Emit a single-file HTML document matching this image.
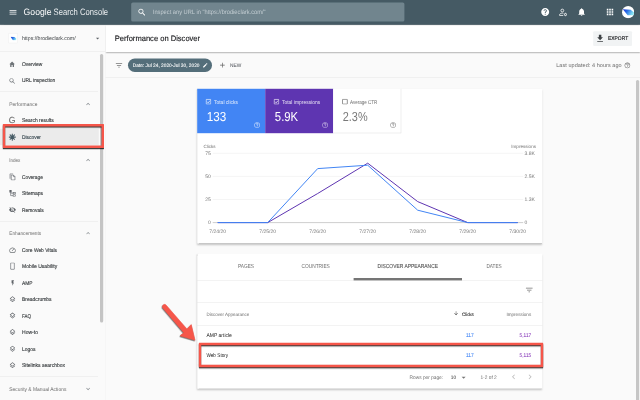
<!DOCTYPE html>
<html lang="en">
<head>
<meta charset="utf-8">
<title>Performance on Discover - Google Search Console</title>
<style>
html,body{margin:0;padding:0;width:640px;height:400px;overflow:hidden;background:#fafafa;}
#stage{text-rendering:geometricPrecision;position:absolute;left:0;top:0;width:1600px;height:1000px;transform:scale(0.4);transform-origin:0 0;font-family:"Liberation Sans",Arial,sans-serif;color:#212121;overflow:hidden;background:#fafafa;}
#stage *{box-sizing:border-box;}
.abs{position:absolute;}
.t{position:absolute;white-space:nowrap;line-height:1;transform-origin:0 50%;}
.b{font-weight:bold;}
.m{-webkit-text-stroke:0.35px currentColor;}
.m2{-webkit-text-stroke:0.18px currentColor;}
.w{color:#fff;}
.g{color:#6b6b6b;}
.nav{color:#3c4043;}
.ic{position:absolute;display:block;}
.lbl{color:rgba(255,255,255,.85);}
.hd{color:#424242;}
.gg{color:#6b6b6b;-webkit-text-stroke:0.25px currentColor;}
.bg{color:#797979;}
.nw{color:#5f6368;}
.ph{color:#c3cdd2;}
.lt{color:#eceff1;}
.act{color:#37474f;}
.ttl{color:#202124;}
.tabon{color:#5a5a5a;}
.row{color:#212121;}
.clk{color:#4285f4;}
.imp{color:#8a3fbb;}
.hl{position:absolute;height:1px;background:#e0e0e0;}
.red{position:absolute;border:6px solid #f6564a;border-radius:1.5px;filter:drop-shadow(0.5px 3px 1.25px rgba(0,0,0,.75));}
</style>
</head>
<body>
<div id="stage">
<!-- ============ TOP BAR ============ -->
<header class="abs" style="left:0;top:0;width:1600px;height:62px;background:#455a64;box-shadow:0 1.5px 3px rgba(0,0,0,.3);z-index:5">
  <svg class="ic" style="left:21px;top:18.5px;width:23px;height:23px" viewBox="0 0 24 24"><path fill="#fff" d="M3 18h18v-2H3v2zm0-5h18v-2H3v2zm0-7v2h18V6H3z"/></svg>
  <span class="t w" style="left:59px;top:19px;font-size:23.25px;transform:scaleX(0.9303)">Google</span>
  <span class="t w lt" style="left:133.75px;top:19px;font-size:23.25px;transform:scaleX(0.8236)">Search Console</span>
  <div class="abs" style="left:327.5px;top:5.75px;width:683.75px;height:48.5px;background:#71858e;border-radius:4px"></div>
  <svg class="ic" style="left:343.25px;top:19px;width:23.5px;height:23.5px" viewBox="0 0 24 24"><path fill="#fff" d="M15.5 14h-.79l-.28-.27C15.41 12.59 16 11.11 16 9.5 16 5.91 13.09 3 9.5 3S3 5.91 3 9.5 5.91 16 9.5 16c1.61 0 3.09-.59 4.23-1.57l.27.28v.79l5 4.99L20.49 19l-4.99-5zm-6 0C7.01 14 5 11.99 5 9.5S7.01 5 9.5 5 14 7.01 14 9.5 11.99 14 9.5 14z"/></svg>
  <span class="t ph" style="left:381.5px;top:22.75px;font-size:15.75px;transform:scaleX(0.9072)">Inspect any URL in "https://brodieclark.com/"</span>
  <!-- right icons -->
  <svg class="ic" style="left:1351.25px;top:18.25px;width:24px;height:24px" viewBox="0 0 24 24"><path fill="#fff" d="M12 2C6.48 2 2 6.48 2 12s4.48 10 10 10 10-4.48 10-10S17.52 2 12 2zm1 17h-2v-2h2v2zm2.07-7.75l-.9.92C13.45 12.9 13 13.5 13 15h-2v-.5c0-1.1.45-2.1 1.17-2.83l1.24-1.26c.37-.36.59-.86.59-1.41 0-1.1-.9-2-2-2s-2 .9-2 2H8c0-2.21 1.79-4 4-4s4 1.79 4 4c0 .88-.36 1.68-.93 2.25z"/></svg>
  <svg class="ic" style="left:1395.75px;top:18.5px;width:23.5px;height:23.5px" viewBox="0 0 24 24" fill="none" stroke="#fff" stroke-width="2"><circle cx="10" cy="7.5" r="3.6"/><path d="M3 20v-1.6c0-2.6 3.4-4.2 7-4.2 .9 0 1.8.1 2.6.3M3 20h9"/><circle cx="17.8" cy="17.6" r="2.6"/><path d="M17.8 13v1.6M17.8 20.6v1.6M13.8 15.3l1.4.8M20.4 19.1l1.4.8M13.8 19.9l1.4-.8M20.4 16.1l1.4-.8" stroke-width="1.6"/></svg>
  <svg class="ic" style="left:1442px;top:18px;width:24px;height:24px" viewBox="0 0 24 24"><path fill="#fff" d="M12 22c1.1 0 2-.9 2-2h-4c0 1.1.89 2 2 2zm6-6v-5c0-3.07-1.64-5.64-4.5-6.32V4c0-.83-.67-1.5-1.5-1.5s-1.5.67-1.5 1.5v.68C7.63 5.36 6 7.92 6 11v5l-2 2v1h16v-1l-2-2z"/></svg>
  <svg class="ic" style="left:1512.5px;top:18.25px;width:24px;height:24px" viewBox="0 0 24 24"><path fill="#fff" d="M4 8h4V4H4v4zm6 12h4v-4h-4v4zm-6 0h4v-4H4v4zm0-6h4v-4H4v4zm6 0h4v-4h-4v4zm6-10v4h4V4h-4zm-6 4h4V4h-4v4zm6 6h4v-4h-4v4zm0 6h4v-4h-4v4z"/></svg>
  <svg class="ic" style="left:1554.625px;top:15.25px;width:30.75px;height:30.75px" viewBox="0 0 24 24"><defs><linearGradient id="wg1" x1="0" y1="0" x2="1" y2="0.35"><stop offset="0" stop-color="#1a2ad2"/><stop offset="0.45" stop-color="#2a6fe6"/><stop offset="1" stop-color="#86e4f2"/></linearGradient></defs><circle cx="12" cy="12" r="12" fill="#fff"/><path fill="url(#wg1)" d="M1.600 6.200L16.900 7.200L23.700 13L21.900 17.900L11 17.900z"/></svg>
</header>
<!-- ============ SIDEBAR ============ -->
<nav class="abs" style="left:0;top:62.5px;width:263.5px;height:937.5px;background:#fafafa;border-right:1px solid #ececec">
  <!-- property selector -->
  <div class="abs" style="left:21px;top:20.5px;width:23px;height:25.25px;background:#fff;border:1px solid #e8e8e8;border-radius:1.5px"></div>
  <svg class="ic" style="left:25.75px;top:28.25px;width:15.5px;height:10.5px" viewBox="0 0 22 14"><defs><linearGradient id="wg2" x1="0" y1="0" x2="1" y2="0.35"><stop offset="0" stop-color="#1a2ad2"/><stop offset="0.45" stop-color="#2a6fe6"/><stop offset="1" stop-color="#86e4f2"/></linearGradient></defs><path fill="url(#wg2)" d="M0.500 0.500L14.500 1.400L21.500 7.500L19.500 13.400L9 13.400z"/></svg>
  <span class="t nav" style="left:55px;top:27px;font-size:13.5px;transform:scaleX(0.9602)">https://brodieclark.com/</span>
  <svg class="ic" style="left:233.5px;top:23.5px;width:20px;height:20px" viewBox="0 0 24 24"><path fill="#5f6368" d="M7 10l5 5 5-5z"/></svg>
  <div class="hl" style="left:0;top:66.5px;width:262.5px"></div>
  <!-- scrollbar -->
  <div class="abs" style="left:250px;top:72.5px;width:7.5px;height:671.25px;background:#c4c4c4;border-radius:3.75px"></div>
  <!-- Overview -->
  <svg class="ic" style="left:22.375px;top:88.75px;width:16.5px;height:19.5px" viewBox="0 0 24 24" preserveAspectRatio="none"><path fill="#6f7478" d="M10 20v-6h4v6h5v-8h3L12 3 2 12h3v8z"/></svg>
  <span class="t nav m" style="left:55px;top:91px;font-size:13.75px;transform:scaleX(0.8813)">Overview</span>
  <!-- URL inspection -->
  <svg class="ic" style="left:20.75px;top:130px;width:19.5px;height:19.5px" viewBox="0 0 24 24"><path fill="#6f7478" d="M15.500 14h-.79l-.28-.27C15.410 12.590 16 11.110 16 9.500 16 5.910 13.090 3 9.500 3S3 5.910 3 9.500 5.910 16 9.500 16c1.610 0 3.090-.59 4.230-1.570l.27.28v.79l5 4.990L20.490 19l-4.990-5zm-6 0C7.010 14 5 11.990 5 9.500S7.010 5 9.500 5 14 7.010 14 9.500 11.990 14 9.500 14z"/></svg>
  <span class="t nav m" style="left:55px;top:131.75px;font-size:13.75px;transform:scaleX(0.8950)">URL inspection</span>
  <div class="hl" style="left:0;top:165.5px;width:245px"></div>
  <!-- Performance -->
  <span class="t g" style="left:22.5px;top:190.5px;font-size:13.25px;transform:scaleX(0.9294)">Performance</span>
  <svg class="ic" style="left:211px;top:188px;width:18.5px;height:18.5px" viewBox="0 0 24 24"><path fill="#80868b" d="M12 8l-6 6 1.410 1.410L12 10.830l4.590 4.590L18 14z"/></svg>
  <span class="t gg" style="left:22.25px;top:227.5px;font-size:22px;transform:scaleX(0.9788)">G</span>
  <span class="t nav m" style="left:55px;top:231.5px;font-size:13.75px;transform:scaleX(0.8989)">Search results</span>
  <!-- Discover (active) -->
  <div class="abs" style="left:0;top:259px;width:246.5px;height:41.5px;background:#ebebeb"></div>
  <svg class="ic" style="left:21px;top:270.5px;width:19.5px;height:19.5px" viewBox="0 0 24 24" stroke="#455a64" stroke-width="3.400" stroke-linecap="round"><path d="M12 2.500v19M2.500 12h19M5.300 5.300l13.400 13.400M18.700 5.300L5.300 18.700"/></svg>
  <span class="t m act" style="left:55px;top:273.75px;font-size:13.75px;transform:scaleX(0.8881)">Discover</span>
  <!-- Index -->
  <div class="hl" style="left:0;top:309.5px;width:245px"></div>
  <span class="t g" style="left:22.5px;top:331.25px;font-size:13.25px;transform:scaleX(0.8638)">Index</span>
  <svg class="ic" style="left:211px;top:328.5px;width:18.5px;height:18.5px" viewBox="0 0 24 24"><path fill="#80868b" d="M12 8l-6 6 1.410 1.410L12 10.830l4.590 4.590L18 14z"/></svg>
  <!-- Coverage -->
  <svg class="ic" style="left:21.5px;top:370px;width:18.5px;height:18.5px" viewBox="0 0 24 24" fill="none" stroke="#5f6368" stroke-width="2" stroke-linejoin="round"><path d="M8 6h7l5 5v11H8z"/><path d="M15 6v5h5"/><path d="M4 18V2h10"/></svg>
  <span class="t nav m" style="left:55px;top:373px;font-size:13.75px;transform:scaleX(0.8722)">Coverage</span>
  <!-- Sitemaps -->
  <svg class="ic" style="left:21.5px;top:411px;width:18.5px;height:18.5px" viewBox="0 0 24 24" fill="none" stroke="#5f6368" stroke-width="2"><rect x="3" y="2.500" width="6" height="6"/><rect x="14" y="9" width="7" height="5"/><rect x="14" y="17" width="7" height="5"/><path d="M6 8.500v11h8M6 11.500h8"/></svg>
  <span class="t nav m" style="left:55px;top:414px;font-size:13.75px;transform:scaleX(0.9160)">Sitemaps</span>
  <!-- Removals -->
  <svg class="ic" style="left:21.5px;top:452.5px;width:18.5px;height:18.5px" viewBox="0 0 24 24"><path fill="#5f6368" d="M12 7c2.760 0 5 2.240 5 5 0 .65-.13 1.260-.36 1.830l2.920 2.920c1.510-1.260 2.700-2.890 3.430-4.750-1.730-4.390-6-7.500-11-7.500-1.400 0-2.740.25-3.980.7l2.160 2.160C10.740 7.130 11.350 7 12 7zM2 4.270l2.280 2.280.46.460C3.080 8.300 1.780 10.020 1 12c1.730 4.390 6 7.500 11 7.500 1.550 0 3.030-.3 4.380-.84l.42.42L19.730 22 21 20.730 3.270 3 2 4.270zM7.530 9.800l1.550 1.550c-.05.21-.08.43-.08.65 0 1.660 1.340 3 3 3 .22 0 .44-.03.65-.08l1.550 1.550c-.67.33-1.410.53-2.200.53-2.760 0-5-2.240-5-5 0-.79.2-1.530.53-2.200zm4.310-.78l3.150 3.150.02-.16c0-1.660-1.340-3-3-3l-.17.010z"/></svg>
  <span class="t nav m" style="left:55px;top:455.5px;font-size:13.75px;transform:scaleX(0.8915)">Removals</span>
  <div class="hl" style="left:0;top:490px;width:245px"></div>
  <!-- Enhancements -->
  <span class="t g" style="left:22.5px;top:513.75px;font-size:13.25px;transform:scaleX(0.9051)">Enhancements</span>
  <svg class="ic" style="left:211px;top:511px;width:18.5px;height:18.5px" viewBox="0 0 24 24"><path fill="#80868b" d="M12 8l-6 6 1.410 1.410L12 10.830l4.590 4.590L18 14z"/></svg>
  <!-- Core Web Vitals -->
  <svg class="ic" style="left:21.5px;top:552.5px;width:18.5px;height:18.5px" viewBox="0 0 24 24" fill="none" stroke="#5f6368" stroke-width="2.300" stroke-linecap="round"><path d="M4 20A9.800 8.600 0 1 1 20 20z"/><path d="M11.500 15l4.500-5"/></svg>
  <span class="t nav m" style="left:55px;top:555px;font-size:13.75px;transform:scaleX(0.8853)">Core Web Vitals</span>
  <!-- Mobile Usability -->
  <svg class="ic" style="left:21.5px;top:593.5px;width:18.5px;height:18.5px" viewBox="0 0 24 24" fill="none" stroke="#5f6368" stroke-width="2"><rect x="6" y="1.500" width="12" height="21" rx="1"/></svg>
  <span class="t nav m" style="left:55px;top:596px;font-size:13.75px;transform:scaleX(0.9140)">Mobile Usability</span>
  <!-- AMP -->
  <svg class="ic" style="left:21.5px;top:635px;width:18.5px;height:18.5px" viewBox="0 0 24 24"><path fill="#5f6368" d="M9 3v10h2.600v8l5.400-10h-3.500l3.500-8z"/></svg>
  <span class="t nav m" style="left:55px;top:638px;font-size:13.75px;transform:scaleX(0.8894)">AMP</span>
  <!-- Breadcrumbs -->
  <svg class="ic" style="left:21.5px;top:676px;width:18.5px;height:18.5px" viewBox="0 0 24 24"><path fill="#5f6368" d="M11.990 18.540l-7.370-5.730L3 14.070l9 7 9-7-1.630-1.270-7.380 5.740zM12 16l7.360-5.730L21 9l-9-7-9 7 1.630 1.270L12 16zm0-11.470L17.740 9 12 13.470 6.260 9 12 4.530z"/></svg>
  <span class="t nav m" style="left:55px;top:679px;font-size:13.75px;transform:scaleX(0.9050)">Breadcrumbs</span>
  <!-- FAQ -->
  <svg class="ic" style="left:21.5px;top:717.5px;width:18.5px;height:18.5px" viewBox="0 0 24 24"><path fill="#5f6368" d="M11.990 18.540l-7.370-5.730L3 14.070l9 7 9-7-1.630-1.270-7.380 5.740zM12 16l7.360-5.730L21 9l-9-7-9 7 1.630 1.270L12 16zm0-11.470L17.740 9 12 13.470 6.260 9 12 4.530z"/></svg>
  <span class="t nav m" style="left:55px;top:720.5px;font-size:13.75px;transform:scaleX(0.8180)">FAQ</span>
  <!-- How-to -->
  <svg class="ic" style="left:21.5px;top:758.5px;width:18.5px;height:18.5px" viewBox="0 0 24 24"><path fill="#5f6368" d="M11.990 18.540l-7.370-5.730L3 14.070l9 7 9-7-1.630-1.270-7.380 5.740zM12 16l7.360-5.730L21 9l-9-7-9 7 1.630 1.270L12 16zm0-11.470L17.740 9 12 13.470 6.260 9 12 4.530z"/></svg>
  <span class="t nav m" style="left:55px;top:761.5px;font-size:13.75px;transform:scaleX(0.9184)">How-to</span>
  <!-- Logos -->
  <svg class="ic" style="left:21.5px;top:800px;width:18.5px;height:18.5px" viewBox="0 0 24 24"><path fill="#5f6368" d="M11.990 18.540l-7.370-5.730L3 14.070l9 7 9-7-1.630-1.270-7.380 5.740zM12 16l7.360-5.730L21 9l-9-7-9 7 1.630 1.270L12 16zm0-11.470L17.740 9 12 13.470 6.260 9 12 4.530z"/></svg>
  <span class="t nav m" style="left:55px;top:803px;font-size:13.75px;transform:scaleX(0.9075)">Logos</span>
  <!-- Sitelinks searchbox -->
  <svg class="ic" style="left:21.5px;top:841px;width:18.5px;height:18.5px" viewBox="0 0 24 24"><path fill="#5f6368" d="M11.990 18.540l-7.370-5.730L3 14.070l9 7 9-7-1.630-1.270-7.380 5.740zM12 16l7.360-5.730L21 9l-9-7-9 7 1.630 1.270L12 16zm0-11.470L17.740 9 12 13.470 6.260 9 12 4.530z"/></svg>
  <span class="t nav m" style="left:55px;top:844.5px;font-size:13.75px;transform:scaleX(0.9075)">Sitelinks searchbox</span>
  <div class="hl" style="left:0;top:877.5px;width:245px"></div>
  <!-- Security -->
  <span class="t g" style="left:22.5px;top:903.25px;font-size:13.25px;transform:scaleX(0.9290)">Security &amp; Manual Actions</span>
  <svg class="ic" style="left:211px;top:900.5px;width:18.5px;height:18.5px" viewBox="0 0 24 24"><path fill="#80868b" d="M16.590 8.590L12 13.170 7.410 8.590 6 10l6 6 6-6z"/></svg>
</nav>
<!-- ============ MAIN ============ -->
<main class="abs" style="left:263.5px;top:62.5px;width:1336.5px;height:937.5px;background:#fafafa">
  <!-- page header -->
  <div class="abs" style="left:0;top:0;width:1336.5px;height:67.5px;background:#fff;box-shadow:0 1.25px 3px rgba(0,0,0,.28);z-index:3">
    <span class="t ttl m" style="left:23px;top:24.5px;font-size:19.75px;transform:scaleX(0.9570)">Performance on Discover</span>
    <div class="abs" style="left:1219px;top:15.5px;width:97.5px;height:36.5px;background:#f1f3f4;border-radius:2.5px"></div>
    <svg class="ic" style="left:1224.75px;top:21.5px;width:24.5px;height:24.5px" viewBox="0 0 24 24"><path fill="#3c4043" d="M19 9h-4V3H9v6H5l7 7 7-7zM5 18v2h14v-2H5z"/></svg>
    <span class="t m ttl" style="left:1256.5px;top:27.25px;font-size:13.25px;transform:scaleX(0.9310)">EXPORT</span>
  </div>
  <!-- filter row -->
  <div class="abs" style="left:0;top:67.5px;width:1336.5px;height:65px;border-bottom:1px solid #e0e0e0">
    <svg class="ic" style="left:23.5px;top:22.5px;width:21px;height:21px" viewBox="0 0 24 24"><path fill="#757575" d="M10 18h4v-2h-4v2zM3 6v2h18V6H3zm3 7h12v-2H6v2z"/></svg>
    <div class="abs" style="left:56.5px;top:15.75px;width:209.5px;height:33.75px;background:#546e7a;border-radius:16.875px"></div>
    <span class="t w m2" style="left:68.25px;top:27.75px;font-size:12.5px;transform:scaleX(0.9598)">Date: Jul 24, 2020-Jul 30, 2020</span>
    <svg class="ic" style="left:242px;top:25.5px;width:14.5px;height:14.5px" viewBox="0 0 24 24"><path fill="#fff" d="M3 17.250V21h3.750L17.810 9.940l-3.750-3.750L3 17.250zM20.710 7.040c.39-.39.39-1.020 0-1.410l-2.340-2.340c-.39-.39-1.020-.39-1.410 0l-1.830 1.830 3.750 3.750 1.830-1.830z"/></svg>
    <svg class="ic" style="left:282.5px;top:23px;width:20px;height:20px" viewBox="0 0 24 24"><path fill="#616161" d="M19 13h-6v6h-2v-6H5v-2h6V5h2v6h6v2z"/></svg>
    <span class="t nw m2" style="left:311.5px;top:26.25px;font-size:13px;transform:scaleX(0.9232)">NEW</span>
    <span class="t g" style="left:1127px;top:26.25px;font-size:13.75px;letter-spacing:0.155px">Last updated: 4 hours ago</span>
    <svg class="ic" style="left:1296px;top:24.5px;width:17px;height:17px" viewBox="0 0 24 24"><path fill="#757575" d="M11 18h2v-2h-2v2zm1-16C6.480 2 2 6.480 2 12s4.480 10 10 10 10-4.480 10-10S17.520 2 12 2zm0 18c-4.410 0-8-3.590-8-8s3.590-8 8-8 8 3.590 8 8-3.590 8-8 8zm0-14c-2.210 0-4 1.790-4 4h2c0-1.100.9-2 2-2s2 .9 2 2c0 2-3 1.750-3 5h2c0-2.250 3-2.500 3-5 0-2.210-1.790-4-4-4z"/></svg>
  </div>
  <!-- right scrollbar -->
  <div class="abs" style="left:1326.5px;top:137.5px;width:7.5px;height:825px;background:#c6c6c6;border-radius:3.75px"></div>
  <!-- ===== CARD 1 : chart ===== -->
  <section class="abs" style="left:229px;top:159.25px;width:863px;height:387.25px;background:#fff;box-shadow:0 1.25px 1.75px rgba(0,0,0,.30),0 2.25px 4.5px rgba(0,0,0,.22),0 0 2px rgba(0,0,0,.18)">
    <!-- tiles -->
    <div class="abs" style="left:0;top:0;width:170px;height:110.75px;background:#4285f4"></div>
    <div class="abs" style="left:170px;top:0;width:170px;height:110.75px;background:#5e35b1"></div>
    <div class="abs" style="left:340px;top:0;width:170px;height:111.25px;background:#fff;border-right:1.25px solid #d4d4d4;border-bottom:1.25px solid #d4d4d4"></div>
    <!-- clicks tile -->
    <svg class="ic" style="left:21.25px;top:25px;width:14.5px;height:14.5px" viewBox="0 0 24 24" fill="none" stroke="#fff" stroke-width="3"><rect x="2" y="2" width="20" height="20" rx="2"/><path d="M6 12l4.500 4.500L18.500 7.500"/></svg>
    <span class="t w lbl" style="left:42.5px;top:26.75px;font-size:13.75px;transform:scaleX(0.9026)">Total clicks</span>
    <span class="t w" style="left:24.75px;top:53px;font-size:32.5px;transform:scaleX(0.8990)">133</span>
    <svg class="ic" style="left:141.75px;top:82px;width:17.5px;height:17.5px" viewBox="0 0 24 24"><path fill="#c6dafc" d="M11 18h2v-2h-2v2zm1-16C6.480 2 2 6.480 2 12s4.480 10 10 10 10-4.480 10-10S17.520 2 12 2zm0 18c-4.410 0-8-3.590-8-8s3.590-8 8-8 8 3.590 8 8-3.590 8-8 8zm0-14c-2.210 0-4 1.790-4 4h2c0-1.100.9-2 2-2s2 .9 2 2c0 2-3 1.750-3 5h2c0-2.250 3-2.500 3-5 0-2.210-1.790-4-4-4z"/></svg>
    <!-- impressions tile -->
    <svg class="ic" style="left:191.25px;top:25px;width:14.5px;height:14.5px" viewBox="0 0 24 24" fill="none" stroke="#fff" stroke-width="3"><rect x="2" y="2" width="20" height="20" rx="2"/><path d="M6 12l4.500 4.500L18.500 7.500"/></svg>
    <span class="t w lbl" style="left:212.25px;top:26.75px;font-size:13.75px;transform:scaleX(0.9014)">Total impressions</span>
    <span class="t w" style="left:194.75px;top:53px;font-size:32.5px;transform:scaleX(0.8750)">5.9K</span>
    <svg class="ic" style="left:311.75px;top:82px;width:17.5px;height:17.5px" viewBox="0 0 24 24"><path fill="#c5b6e3" d="M11 18h2v-2h-2v2zm1-16C6.480 2 2 6.480 2 12s4.480 10 10 10 10-4.480 10-10S17.520 2 12 2zm0 18c-4.410 0-8-3.590-8-8s3.590-8 8-8 8 3.590 8 8-3.590 8-8 8zm0-14c-2.210 0-4 1.790-4 4h2c0-1.100.9-2 2-2s2 .9 2 2c0 2-3 1.750-3 5h2c0-2.250 3-2.500 3-5 0-2.210-1.790-4-4-4z"/></svg>
    <!-- ctr tile -->
    <svg class="ic" style="left:362.5px;top:25px;width:14.5px;height:14.5px" viewBox="0 0 24 24" fill="none" stroke="#616161" stroke-width="2.800"><rect x="2" y="2" width="20" height="20" rx="2"/></svg>
    <span class="t g" style="left:382.5px;top:26.75px;font-size:13.75px;transform:scaleX(0.8249)">Average CTR</span>
    <span class="t bg" style="left:364px;top:53px;font-size:32.5px;transform:scaleX(0.8370)">2.3%</span>
    <svg class="ic" style="left:481.75px;top:82px;width:17.5px;height:17.5px" viewBox="0 0 24 24"><path fill="#8c8c8c" d="M11 18h2v-2h-2v2zm1-16C6.480 2 2 6.480 2 12s4.480 10 10 10 10-4.480 10-10S17.520 2 12 2zm0 18c-4.410 0-8-3.590-8-8s3.590-8 8-8 8 3.590 8 8-3.590 8-8 8zm0-14c-2.210 0-4 1.790-4 4h2c0-1.100.9-2 2-2s2 .9 2 2c0 2-3 1.750-3 5h2c0-2.250 3-2.500 3-5 0-2.210-1.790-4-4-4z"/></svg>
    <!-- chart -->
    <svg class="ic" style="left:0;top:110.75px;width:861.5px;height:276.5px" viewBox="0 0 344.600 110.600">
      <g stroke="#ebebeb" stroke-width="0.500">
        <line x1="15.500" y1="20.100" x2="326" y2="20.100"/>
        <line x1="15.500" y1="43.200" x2="326" y2="43.200"/>
        <line x1="15.500" y1="66.300" x2="326" y2="66.300"/>
      </g>
      <line x1="15.500" y1="89.400" x2="326" y2="89.400" stroke="#9e9e9e" stroke-width="0.500"/>
      <polyline fill="none" stroke="#5e35b1" stroke-width="1" stroke-linejoin="round" points="20.500,89.400 70.500,89.400 120.500,60.300 170.500,30 220.500,68.400 270.500,89.400 320.500,89.400"/>
      <polyline fill="none" stroke="#4285f4" stroke-width="1" stroke-linejoin="round" points="20.500,89.400 70.500,89.400 120.500,35.400 170.500,32 220.500,77 270.500,89.400 320.500,89.400"/>
      <g font-family="Liberation Sans, Arial, sans-serif" font-size="5" fill="#757575">
        <text x="6.200" y="14.650" font-size="4.600">Clicks</text>
        <text x="338.800" y="14.650" font-size="4.600" text-anchor="end">Impressions</text>
        <text x="13.600" y="21.900" text-anchor="end">75</text>
        <text x="13.600" y="45" text-anchor="end">50</text>
        <text x="13.600" y="68.100" text-anchor="end">25</text>
        <text x="13.600" y="91.200" text-anchor="end">0</text>
        <text x="327.400" y="21.900">3.8K</text>
        <text x="327.400" y="45">2.5K</text>
        <text x="327.400" y="68.100">1.3K</text>
        <text x="327.400" y="91.200">0</text>
        <text x="20.500" y="99.800" text-anchor="middle">7/24/20</text>
        <text x="70.500" y="99.800" text-anchor="middle">7/25/20</text>
        <text x="120.500" y="99.800" text-anchor="middle">7/26/20</text>
        <text x="170.500" y="99.800" text-anchor="middle">7/27/20</text>
        <text x="220.500" y="99.800" text-anchor="middle">7/28/20</text>
        <text x="270.500" y="99.800" text-anchor="middle">7/29/20</text>
        <text x="320.500" y="99.800" text-anchor="middle">7/30/20</text>
      </g>
    </svg>
  </section>
  <!-- ===== CARD 2 : table ===== -->
  <section class="abs" style="left:229px;top:571px;width:863px;height:338.5px;background:#fff;box-shadow:0 1.25px 1.75px rgba(0,0,0,.30),0 2.25px 4.5px rgba(0,0,0,.22),0 0 2px rgba(0,0,0,.18)">
    <!-- tabs -->
    <span class="t g" style="left:102px;top:26.25px;font-size:14.5px;transform:scaleX(0.8182)">PAGES</span>
    <span class="t g" style="left:261.75px;top:26.25px;font-size:14.5px;transform:scaleX(0.8256)">COUNTRIES</span>
    <span class="t m tabon" style="left:451.5px;top:26.25px;font-size:14.5px;transform:scaleX(0.8479)">DISCOVER APPEARANCE</span>
    <span class="t g" style="left:723px;top:26.25px;font-size:14.5px;transform:scaleX(0.8092)">DATES</span>
    <div class="hl" style="left:0;top:67px;width:863px"></div>
    <div class="abs" style="left:391.5px;top:61.5px;width:271px;height:5.5px;background:#757575"></div>
    <!-- filter -->
    <svg class="ic" style="left:819.75px;top:80.375px;width:22.25px;height:22.25px" viewBox="0 0 24 24"><path fill="#757575" d="M10 18h4v-2h-4v2zM3 6v2h18V6H3zm3 7h12v-2H6v2z"/></svg>
    <div class="hl" style="left:0;top:122.25px;width:863px"></div>
    <!-- head -->
    <span class="t g" style="left:23px;top:145.75px;font-size:12px;transform:scaleX(0.9381)">Discover Appearance</span>
    <svg class="ic" style="left:640.125px;top:142.625px;width:14.25px;height:14.25px" viewBox="0 0 24 24"><path fill="#424242" d="M20 12l-1.410-1.410L13 16.170V4h-2v12.170l-5.580-5.590L4 12l8 8 8-8z"/></svg>
    <span class="t m hd" style="left:662.5px;top:145.75px;font-size:12px;transform:scaleX(0.9219)">Clicks</span>
    <span class="t g" style="left:773px;top:145.75px;font-size:12px;transform:scaleX(0.9584)">Impressions</span>
    <div class="hl" style="left:0;top:179px;width:863px"></div>
    <!-- row 1 -->
    <span class="t row" style="left:23px;top:197.75px;font-size:13.5px;transform:scaleX(0.9270)">AMP article</span>
    <span class="t clk m2" style="left:672.5px;top:197.75px;font-size:13.5px;transform:scaleX(0.9060)">117</span>
    <span class="t imp m2" style="left:806px;top:197.75px;font-size:13.5px;transform:scaleX(0.8847)">5,117</span>
    <div class="hl" style="left:0;top:228.5px;width:863px"></div>
    <!-- row 2 -->
    <span class="t row" style="left:23px;top:247.25px;font-size:13.5px;transform:scaleX(0.8682)">Web Story</span>
    <span class="t clk m2" style="left:672.5px;top:247.25px;font-size:13.5px;transform:scaleX(0.9060)">117</span>
    <span class="t imp m2" style="left:806px;top:247.25px;font-size:13.5px;transform:scaleX(0.8847)">5,115</span>
    <div class="hl" style="left:0;top:278.5px;width:863px"></div>
    <!-- footer -->
    <span class="t g" style="left:531px;top:303.5px;font-size:12.5px;transform:scaleX(0.9566)">Rows per page:</span>
    <span class="t row" style="left:634px;top:303.5px;font-size:12.5px;transform:scaleX(0.9350)">10</span>
    <svg class="ic" style="left:654.875px;top:298.25px;width:24px;height:24px" viewBox="0 0 24 24"><path fill="#757575" d="M7 10l5 5 5-5z"/></svg>
    <span class="t g" style="left:708px;top:303.5px;font-size:12.5px;transform:scaleX(0.9672)">1-2 of 2</span>
    <svg class="ic" style="left:779.25px;top:296px;width:24px;height:24px" viewBox="0 0 24 24"><path fill="#bdbdbd" d="M15.410 7.410L14 6l-6 6 6 6 1.410-1.410L10.830 12z"/></svg>
    <svg class="ic" style="left:820.25px;top:296px;width:24px;height:24px" viewBox="0 0 24 24"><path fill="#bdbdbd" d="M10 6L8.590 7.410 13.170 12l-4.580 4.590L10 18l6-6z"/></svg>
  </section>
</main>
<!-- ============ ANNOTATIONS ============ -->
<div class="red" style="left:6.5px;top:309.5px;width:253px;height:60px;z-index:9"></div>
<div class="red" style="left:496.5px;top:856.5px;width:861px;height:61.5px;z-index:9"></div>
<svg class="ic" style="left:375px;top:737.5px;width:150px;height:150px;z-index:9;filter:drop-shadow(-0.75px 2.5px 1.5px rgba(0,0,0,.6))" viewBox="0 0 60 60"><path fill="#f6564a" stroke="#f6564a" stroke-width="0.600" stroke-linejoin="round" d="M12.970 12.980A2.200 2.200 0 0 1 16.230 10.020L36.900 33.750L41.250 29.400L45 45L30 40.600L33.750 37.500z"/></svg>
</div>
</body>
</html>
